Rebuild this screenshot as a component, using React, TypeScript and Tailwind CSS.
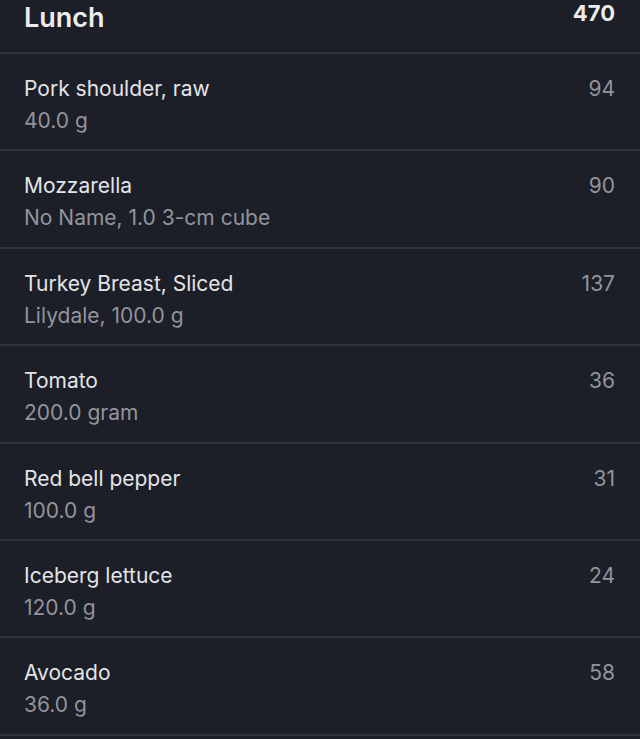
import React from "react";

type Item = {
  name: string;
  detail: string;
  kcal: number;
};

const ITEMS: Item[] = [
  { name: "Pork shoulder, raw", detail: "40.0 g", kcal: 94 },
  { name: "Mozzarella", detail: "No Name, 1.0 3-cm cube", kcal: 90 },
  { name: "Turkey Breast, Sliced", detail: "Lilydale, 100.0 g", kcal: 137 },
  { name: "Tomato", detail: "200.0 gram", kcal: 36 },
  { name: "Red bell pepper", detail: "100.0 g", kcal: 31 },
  { name: "Iceberg lettuce", detail: "120.0 g", kcal: 24 },
  { name: "Avocado", detail: "36.0 g", kcal: 58 },
];

const FoodRow = ({ item }: { item: Item }) => (
  <div className="flex h-[97.4px] justify-between border-b-2 border-[#30323c] pl-6 pr-[25px] pt-[21px]">
    <div>
      <div className="text-[21px] leading-7 text-[#e4e4e7]">{item.name}</div>
      <div className="mt-[4px] text-[21px] leading-7 text-[#93949b]">
        {item.detail}
      </div>
    </div>
    <div className="text-[21px] leading-7 text-[#93949b]">{item.kcal}</div>
  </div>
);

export default function App() {
  const total = ITEMS.reduce((sum, i) => sum + i.kcal, 0);

  return (
    <div
      className="min-h-[739px] w-full overflow-hidden bg-[#1c1e28]"
      style={{ fontFamily: "Inter, 'Noto Sans', sans-serif" }}
    >
      <div className="-mt-[4px] flex h-[58px] items-start justify-between border-b-2 border-[#30323c] pl-6 pr-[25px]">
        <div className="pt-[4px] text-[27px] font-semibold leading-9 text-[#ececee]">
          Lunch
        </div>
        <div className="pt-[1px] text-[22px] font-bold leading-8 text-[#ececee]">
          {total}
        </div>
      </div>
      {ITEMS.map((item) => (
        <FoodRow key={item.name} item={item} />
      ))}
    </div>
  );
}
